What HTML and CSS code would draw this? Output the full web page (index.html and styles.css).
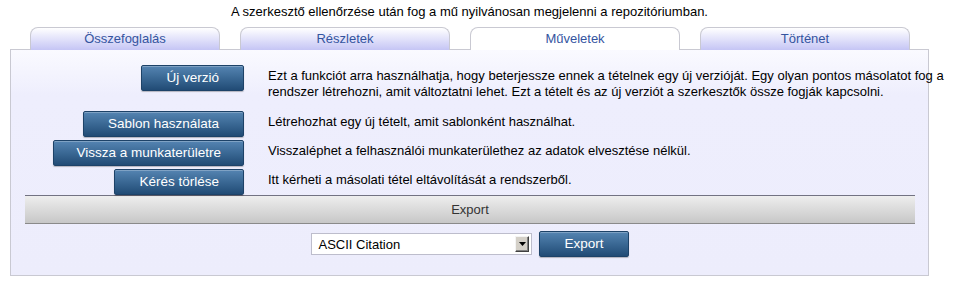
FILE: index.html
```html
<!DOCTYPE html>
<html lang="hu">
<head>
<meta charset="utf-8">
<title>Műveletek</title>
<link rel="stylesheet" href="styles.css">
</head>
<body>
<div class="wrap">
  <p class="notice">A szerkesztő ellenőrzése után fog a mű nyilvánosan megjelenni a repozitóriumban.</p>
  <ul class="tabs">
    <li class="tab tab-first">Összefoglalás</li>
    <li class="tab">Részletek</li>
    <li class="tab tab-active">Műveletek</li>
    <li class="tab">Történet</li>
  </ul>
  <div class="panel">
    <div class="actions">
      <div class="act-btn act-first"><button class="btn">Új verzió</button></div>
      <div class="act-desc act-desc-first">Ezt a funkciót arra használhatja, hogy beterjessze ennek a tételnek egy új verzióját. Egy olyan pontos másolatot fog a rendszer létrehozni, amit változtatni lehet. Ezt a tételt és az új verziót a szerkesztők össze fogják kapcsolni.</div>
      <div class="act-btn"><button class="btn">Sablon használata</button></div>
      <div class="act-desc">Létrehozhat egy új tételt, amit sablonként használhat.</div>
      <div class="act-btn"><button class="btn btn-narrow">Vissza a munkaterületre</button></div>
      <div class="act-desc">Visszaléphet a felhasználói munkaterülethez az adatok elvesztése nélkül.</div>
      <div class="act-btn"><button class="btn">Kérés törlése</button></div>
      <div class="act-desc">Itt kérheti a másolati tétel eltávolítását a rendszerből.</div>
    </div>
    <div class="export-bar">Export</div>
    <div class="export-row">
      <div class="select-box">
        <select class="select">
          <option>ASCII Citation</option>
        </select>
        <span class="select-arrow"><svg width="7" height="4" viewBox="0 0 7 4"><path d="M0 0H7L3.5 4Z" fill="#000"/></svg></span>
      </div>
      <button class="btn">Export</button>
    </div>
  </div>
</div>
</body>
</html>
```
FILE: styles.css
```css
* { box-sizing: border-box; }
body {
  margin: 0;
  background: #fff;
  font-family: "Liberation Sans", Arial, sans-serif;
  font-size: 13px;
  color: #000;
}
.wrap {
  margin-left: 10px;
  width: 919px;
}
.notice {
  margin: 0;
  padding-top: 4px;
  line-height: 16px;
  text-align: center;
}
.tabs {
  list-style: none;
  margin: 7px 0 -1px 0;
  padding: 0 0 0 20px;
  display: flex;
  gap: 20px;
  position: relative;
  z-index: 1;
}
.tab {
  width: 210px;
  height: 23px;
  border: 1px solid #c9c9d2;
  border-bottom: none;
  border-radius: 8px 8px 0 0;
  background: linear-gradient(#ffffff, #c5c5f5);
  color: #34549f;
  text-align: center;
  line-height: 21px;
}
.tab-first { width: 190px; }
.tab-active {
  background: #ffffff;
}
.panel {
  border: 1px solid #c9c9d2;
  background: linear-gradient(#fafaff 0, #eeeefd 45px, #ededfc 100%);
  padding: 15px 13px 18px 14px;
}
.actions {
  display: grid;
  grid-template-columns: 219px 688px;
  column-gap: 24px;
  row-gap: 3px;
}
.act-btn {
  display: flex;
  justify-content: flex-end;
  align-items: flex-start;
}
.act-desc {
  line-height: 16px;
  padding-top: 3px;
}
.act-desc-first {
  padding-top: 3px;
  padding-bottom: 8px;
}
.btn {
  height: 26px;
  padding: 0 24px;
  border: 1px solid #1d4268;
  border-radius: 2px;
  background: linear-gradient(#5584b2, #3a6894 50%, #214b75);
  box-shadow: inset 0 1px 0 rgba(255,255,255,0.25), 0 1px 1px rgba(0,0,0,0.25);
  color: #fff;
  font-family: "Liberation Sans", Arial, sans-serif;
  font-size: 13.5px;
  line-height: 24px;
  cursor: pointer;
}
.btn-narrow { padding: 0 22px; }
.export-bar {
  height: 29px;
  border-top: 1px solid #727282;
  border-bottom: 1px solid #8a8a8a;
  background: linear-gradient(#eeeeee, #c7c7c7);
  color: #333;
  text-align: center;
  line-height: 27px;
}
.export-row {
  margin-top: 7px;
  display: flex;
  justify-content: center;
  align-items: center;
  gap: 7px;
}
.select-box {
  position: relative;
  width: 221px;
  height: 22px;
}
.select {
  appearance: none;
  -webkit-appearance: none;
  width: 100%;
  height: 100%;
  margin: 0;
  border: 1px solid #bdbdcc;
  border-radius: 0;
  background: #fff;
  padding: 0 20px 0 6px;
  font-family: "Liberation Sans", Arial, sans-serif;
  font-size: 13px;
  color: #000;
}
.select-arrow {
  position: absolute;
  right: 3px;
  top: 3px;
  width: 14px;
  height: 16px;
  background: #d4d0c8;
  border: 1px solid;
  border-color: #f4f4f4 #404040 #404040 #f4f4f4;
  box-shadow: inset -1px -1px 0 #808080;
  display: flex;
  align-items: center;
  justify-content: center;
  pointer-events: none;
}
.select-arrow svg { display: block; }
```
